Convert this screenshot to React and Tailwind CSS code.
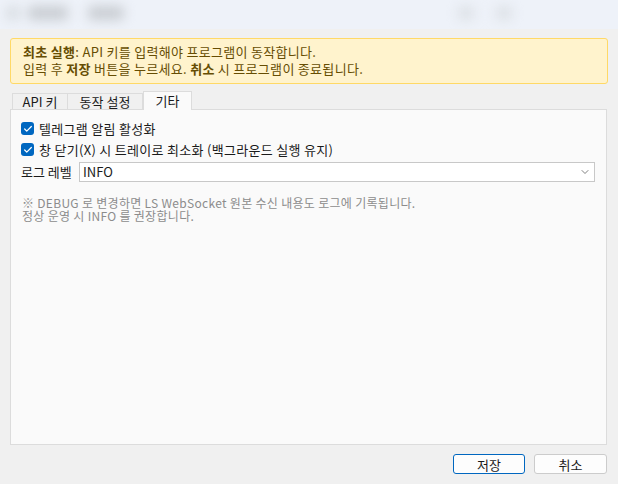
import React from 'react';
import { Check, ChevronDown } from 'lucide-react';

const font = { fontFamily: '"Noto Sans CJK KR", "Noto Sans", sans-serif' };

const CheckRow = ({ label }) => (
  <label className="flex items-center h-[21px]">
    <span className="w-[13px] h-[13px] rounded-[3px] bg-[#0067c0] flex items-center justify-center">
      <Check className="w-[10px] h-[10px] text-white" strokeWidth={3} />
    </span>
    <span className="ml-[5px] text-[13px] tracking-[0.3px] text-[#1a1a1a]">{label}</span>
  </label>
);

const App = () => {
  return (
    <div className="w-[618px] h-[484px] bg-[#f0f0f0] flex flex-col overflow-hidden" style={font}>
      {/* window title bar */}
      <div className="h-[29px] bg-[#eef2f9] relative overflow-hidden">
        <div className="absolute inset-0 blur-[6px]">
          <div className="absolute left-[6px] top-[6px] w-[14px] h-[14px] rounded bg-[#d8dde2]" />
          <div className="absolute left-[28px] top-[6px] w-[40px] h-[14px] rounded bg-[#c9cdd2]" />
          <div className="absolute left-[88px] top-[6px] w-[36px] h-[14px] rounded bg-[#c9cdd2]" />
          <div className="absolute left-[458px] top-[6px] w-[16px] h-[14px] rounded bg-[#dde1e6]" />
          <div className="absolute left-[496px] top-[6px] w-[16px] h-[14px] rounded bg-[#dde1e6]" />
        </div>
      </div>

      <div className="flex-1 flex flex-col px-[10px] pt-[9px]">
        {/* first-run notice */}
        <div className="h-[46px] w-[598px] border border-[#ffd966] bg-[#fff3cd] rounded-[3px] px-[12px] pt-[4px] text-[13px] leading-[17px] tracking-[0.3px] text-[#664d03]">
          <div>
            <b>최초 실행</b>: API 키를 입력해야 프로그램이 동작합니다.
          </div>
          <div>
            입력 후 <b>저장</b> 버튼을 누르세요. <b>취소</b> 시 프로그램이 종료됩니다.
          </div>
        </div>

        {/* tabs */}
        <div className="flex items-end h-[18px] mt-[7px] pl-[2px] text-[13px] text-[#1a1a1a]">
          <div className="w-[56px] h-[16px] border border-b-0 border-[#dcdcdc] bg-[#f0f0f0] flex items-center justify-center">
            API 키
          </div>
          <div className="w-[75px] h-[16px] border border-b-0 border-l-0 border-[#dcdcdc] bg-[#f0f0f0] flex items-center justify-center">
            동작 설정
          </div>
          <div className="w-[49px] h-[19px] border border-b-0 border-[#dcdcdc] bg-[#fafafa] flex items-center justify-center -mb-px relative z-10">
            기타
          </div>
        </div>

        {/* tab page */}
        <div className="w-[597px] h-[336px] border border-[#dcdcdc] bg-[#fafafa] px-[10px] pt-[8px]">
          <CheckRow label="텔레그램 알림 활성화" />
          <CheckRow label="창 닫기(X) 시 트레이로 최소화 (백그라운드 실행 유지)" />
          <div className="flex items-center mt-[2px]">
            <span className="w-[58px] text-[13px] text-[#1a1a1a]">로그 레벨</span>
            <div className="w-[516px] h-[20px] border border-[#c8c8c8] bg-white flex items-center justify-between px-[3px] text-[13px] text-[#1a1a1a]">
              <span>INFO</span>
              <ChevronDown className="w-[12px] h-[12px] text-[#555]" strokeWidth={1.5} />
            </div>
          </div>
          <div className="mt-[14px] text-[12px] leading-[13px] tracking-[0.3px] text-[#8c8c8c] pl-[1px]">
            <div>※ DEBUG 로 변경하면 LS WebSocket 원본 수신 내용도 로그에 기록됩니다.</div>
            <div>정상 운영 시 INFO 를 권장합니다.</div>
          </div>
        </div>

        {/* dialog buttons */}
        <div className="flex justify-end gap-[9px] mt-[9px] pr-[1px]">
          <button className="w-[72px] h-[20px] rounded-[3px] border border-[#0067c0] bg-[#fdfdfd] text-[13px] text-[#1a1a1a] leading-none">
            저장
          </button>
          <button className="w-[73px] h-[20px] rounded-[3px] border border-[#cccccc] bg-[#fdfdfd] text-[13px] text-[#1a1a1a] leading-none">
            취소
          </button>
        </div>
      </div>
    </div>
  );
};

export default App;
